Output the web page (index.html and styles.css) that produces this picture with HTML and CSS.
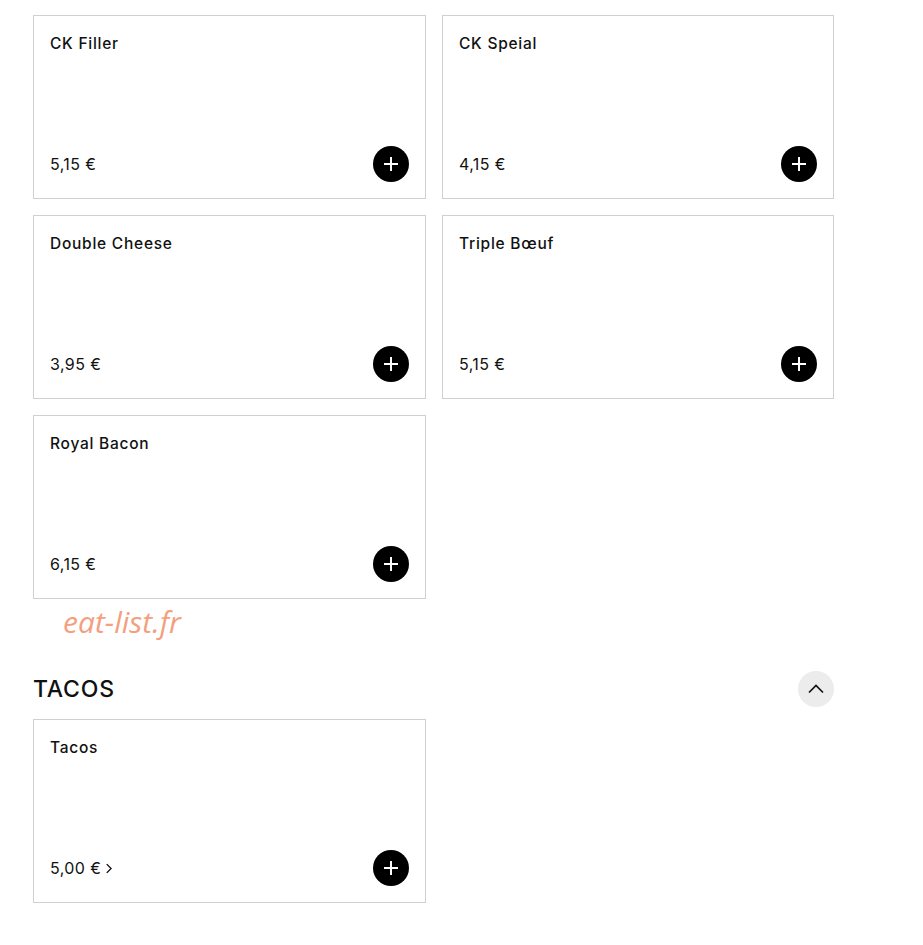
FILE: index.html
```html
<!DOCTYPE html>
<html lang="fr">
<head>
    <meta charset="UTF-8">
    <meta name="viewport" content="width=device-width, initial-scale=1.0">
    <title>Menu</title>
    <link rel="stylesheet" href="styles.css">
</head>
<body>
    <div class="menu">
        <div class="products">
            <div class="product">
                <p class="name">CK Filler</p>
                <div class="bottom">
                    <span class="price">5,15 €</span>
                    <button class="add"><svg viewBox="0 0 16 16"><path d="M8 1v14M1 8h14"/></svg></button>
                </div>
            </div>
            <div class="product">
                <p class="name">CK Speial</p>
                <div class="bottom">
                    <span class="price">4,15 €</span>
                    <button class="add"><svg viewBox="0 0 16 16"><path d="M8 1v14M1 8h14"/></svg></button>
                </div>
            </div>
            <div class="product">
                <p class="name">Double Cheese</p>
                <div class="bottom">
                    <span class="price">3,95 €</span>
                    <button class="add"><svg viewBox="0 0 16 16"><path d="M8 1v14M1 8h14"/></svg></button>
                </div>
            </div>
            <div class="product">
                <p class="name">Triple Bœuf</p>
                <div class="bottom">
                    <span class="price">5,15 €</span>
                    <button class="add"><svg viewBox="0 0 16 16"><path d="M8 1v14M1 8h14"/></svg></button>
                </div>
            </div>
            <div class="product">
                <p class="name">Royal Bacon</p>
                <div class="bottom">
                    <span class="price">6,15 €</span>
                    <button class="add"><svg viewBox="0 0 16 16"><path d="M8 1v14M1 8h14"/></svg></button>
                </div>
            </div>
        </div>

        <div class="brand">eat-list.fr</div>

        <div class="category">
            <h2>TACOS</h2>
            <button class="toggle"><svg viewBox="0 0 18 18"><path d="M2 12.5l7-7 7 7"/></svg></button>
        </div>
        <div class="products">
            <div class="product">
                <p class="name">Tacos</p>
                <div class="bottom">
                    <span class="price">5,00 € <svg class="more" viewBox="0 0 8 12"><path d="M2 1l5 5-5 5"/></svg></span>
                    <button class="add"><svg viewBox="0 0 16 16"><path d="M8 1v14M1 8h14"/></svg></button>
                </div>
            </div>
        </div>
    </div>
</body>
</html>
```

FILE: styles.css
```css
body {margin:0; background:#fff; color:#111; font-family:"Inter", "Noto Sans", sans-serif;}
.menu {width:801px; padding:15px 0 0 33px;}
.products {display:grid; grid-template-columns:393px 392px; gap:16px;}
.product {height:184px; border:1px solid #d0d0d0; padding:0 16px; display:flex; flex-direction:column; justify-content:space-between; box-sizing:border-box;}
.name {margin:18px 0 0; font-size:15.5px; font-weight:500; line-height:20px; letter-spacing:0.75px;}
.bottom {display:flex; justify-content:space-between; align-items:center; margin-bottom:16px;}
.price {font-size:16px; letter-spacing:0.4px; display:flex; align-items:center; gap:4px;}
.more {width:7px; height:11px; fill:none; stroke:#111; stroke-width:1.6;}
.add {width:36px; height:36px; border:none; border-radius:50%; background:#000; padding:0; display:flex; align-items:center; justify-content:center;}
.add svg {width:16px; height:16px; fill:none; stroke:#fff; stroke-width:2;}
.brand {margin:6px 0 0 30px; font-family:"Open Sans", sans-serif; font-style:italic; font-size:30px; color:#f4a07e; line-height:34px;}
.category {display:flex; justify-content:space-between; align-items:center; margin:32px 0 12px;}
.category h2 {margin:0; font-size:23px; font-weight:500; letter-spacing:0.8px;}
.toggle {width:36px; height:36px; border:none; border-radius:50%; background:#ececec; padding:0; display:flex; align-items:center; justify-content:center;}
.toggle svg {width:18px; height:18px; fill:none; stroke:#111; stroke-width:1.7;}
```
